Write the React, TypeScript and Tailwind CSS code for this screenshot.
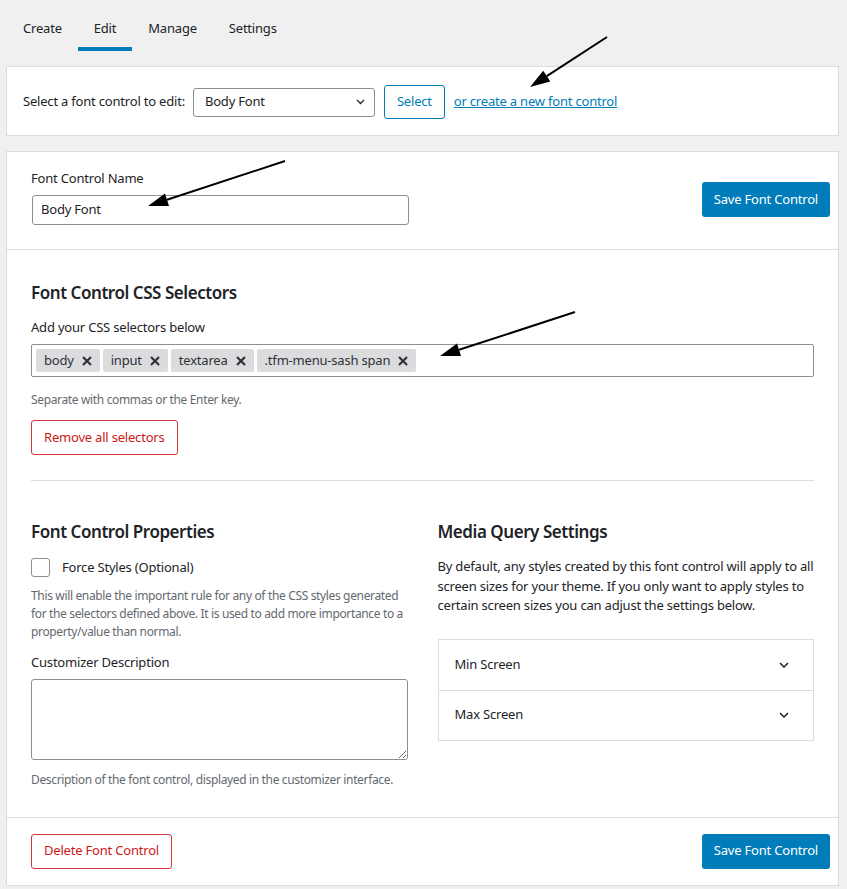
import { useState } from "react";

const tabs = ["Create", "Edit", "Manage", "Settings"];
const selectors = ["body", "input", "textarea", ".tfm-menu-sash span"];

const Chevron = ({ w = 10 }: { w?: number }) => (
  <svg width={w} height={w * 0.6} viewBox="0 0 10 6" fill="none">
    <path d="M1 1l4 4 4-4" stroke="#1d2327" strokeWidth="1.5" />
  </svg>
);

const Cross = () => (
  <svg width="10" height="10" viewBox="0 0 10 10">
    <path d="M1 1l8 8M9 1l-8 8" stroke="#2c3338" strokeWidth="2.2" />
  </svg>
);

const Arrow = ({ x1, y1, x2, y2 }: { x1: number; y1: number; x2: number; y2: number }) => {
  const a = Math.atan2(y2 - y1, x2 - x1);
  const len = 20;
  const half = 6.5;
  const bx = x2 - len * Math.cos(a);
  const by = y2 - len * Math.sin(a);
  const p1 = `${bx + half * Math.sin(a)},${by - half * Math.cos(a)}`;
  const p2 = `${bx - half * Math.sin(a)},${by + half * Math.cos(a)}`;
  return (
    <g>
      <line x1={x1} y1={y1} x2={bx} y2={by} stroke="#000" strokeWidth="2" />
      <polygon points={`${x2},${y2} ${p1} ${p2}`} fill="#000" />
    </g>
  );
};

const App = () => {
  const [active] = useState("Edit");

  return (
    <div
      className="relative min-h-[889px] bg-[#f0f0f1] text-[13px] tracking-[-0.2px] text-[#1d2327]"
      style={{ fontFamily: '"Noto Sans", "Open Sans", sans-serif' }}
    >
      {/* TABS */}
      <div className="flex pl-[7px]">
        {tabs.map((tab) => (
          <div
            key={tab}
            className={`px-4 pt-[18px] pb-[9px] leading-5 border-b-4 ${
              tab === active ? "border-[#007cba]" : "border-transparent"
            }`}
          >
            {tab}
          </div>
        ))}
      </div>

      <div className="px-[6px] pr-[8px]">
        {/* SELECT CARD */}
        <div className="mt-[15px] bg-white border border-[#dcdcde] px-4 pt-[18px] pb-4 flex items-center">
          <span>Select a font control to edit:</span>
          <div className="ml-2 w-[182px] h-[29px] border border-[#8c8f94] rounded-[3px] flex items-center justify-between pl-[11px] pr-[9px]">
            <span>Body Font</span>
            <Chevron w={9} />
          </div>
          <button className="ml-[9px] h-[34px] px-3 border border-[#007cba] text-[#007cba] rounded-[3px]">
            Select
          </button>
          <a className="ml-[9px] text-[#007cba] underline">or create a new font control</a>
        </div>

        {/* MAIN CARD */}
        <div className="mt-[15px] bg-white border border-[#dcdcde]">
          <div className="pl-6 pr-2 pt-[17px] pb-6 flex items-center justify-between border-b border-[#dcdcde]">
            <div>
              <div className="leading-[18px]">Font Control Name</div>
              <div className="mt-2 w-[377px] h-[30px] border border-[#8c8f94] rounded-[3px] flex items-center px-2 ml-px">
                Body Font
              </div>
            </div>
            <button className="mt-[5px] h-[35px] px-3 bg-[#007cba] text-white rounded-[3px]">
              Save Font Control
            </button>
          </div>

          <div className="px-6 pt-[31px] pb-[29px]">
            <h2 className="text-[17px] font-semibold leading-6 tracking-[-0.45px]">Font Control CSS Selectors</h2>
            <div className="mt-[13px] leading-[18px]">Add your CSS selectors below</div>
            <div className="mt-2 h-[33px] border border-[#8c8f94] rounded-[2px] flex items-center gap-[3px] px-1">
              {selectors.map((s) => (
                <span
                  key={s}
                  className="h-[23px] bg-[#dcdcde] rounded-[2px] pl-2 pr-2 flex items-center gap-2 text-[#2c3338]"
                >
                  {s}
                  <Cross />
                </span>
              ))}
            </div>
            <p className="mt-[15px] text-[12px] leading-4 tracking-[-0.35px] text-[#646970]">
              Separate with commas or the Enter key.
            </p>
            <button className="mt-3 h-[35px] px-3 border border-[#d63638] text-[#cc1818] rounded-[3px]">
              Remove all selectors
            </button>
            <div className="mt-[25px] border-t border-[#dcdcde]" />

            <div className="mt-[39px] grid grid-cols-2 gap-[30px]">
              <div>
                <h2 className="text-[17px] font-semibold leading-6 tracking-[-0.45px]">Font Control Properties</h2>
                <label className="mt-[14px] flex items-center">
                  <span className="w-[19px] h-[19px] border border-[#8c8f94] rounded-[3px]" />
                  <span className="ml-3">Force Styles (Optional)</span>
                </label>
                <p className="mt-[9px] text-[12px] leading-[18px] tracking-[-0.35px] text-[#646970]">
                  This will enable the important rule for any of the CSS styles generated for the selectors defined
                  above. It is used to add more importance to a property/value than normal.
                </p>
                <div className="mt-3 leading-[18px]">Customizer Description</div>
                <textarea
                  readOnly
                  className="mt-2 block w-full h-[81px] border border-[#8c8f94] rounded-[3px]"
                />
                <p className="mt-3 text-[12px] leading-4 tracking-[-0.35px] text-[#646970]">
                  Description of the font control, displayed in the customizer interface.
                </p>
              </div>
              <div>
                <h2 className="text-[17px] font-semibold leading-6 tracking-[-0.45px]">Media Query Settings</h2>
                <p className="mt-[13px] leading-[19.5px]">
                  By default, any styles created by this font control will apply to all screen sizes for your theme.
                  If you only want to apply styles to certain screen sizes you can adjust the settings below.
                </p>
                <div className="mt-[23px] border border-[#dcdcde]">
                  {["Min Screen", "Max Screen"].map((item, i) => (
                    <div
                      key={item}
                      className={`h-[50px] flex items-center justify-between pl-4 pr-6 ${
                        i > 0 ? "border-t border-[#dcdcde]" : ""
                      }`}
                    >
                      <span>{item}</span>
                      <Chevron w={10} />
                    </div>
                  ))}
                </div>
              </div>
            </div>
          </div>

          <div className="pl-6 pr-2 py-4 flex items-center justify-between border-t border-[#dcdcde]">
            <button className="h-[35px] px-3 border border-[#d63638] text-[#cc1818] rounded-[3px]">
              Delete Font Control
            </button>
            <button className="h-[35px] px-3 bg-[#007cba] text-white rounded-[3px]">Save Font Control</button>
          </div>
        </div>
      </div>

      {/* ANNOTATION ARROWS */}
      <svg className="absolute inset-0 pointer-events-none" width="847" height="889">
        <Arrow x1={607} y1={37} x2={530} y2={87} />
        <Arrow x1={285} y1={161} x2={148} y2={206} />
        <Arrow x1={575} y1={312} x2={440} y2={356} />
      </svg>
    </div>
  );
};

export default App;
